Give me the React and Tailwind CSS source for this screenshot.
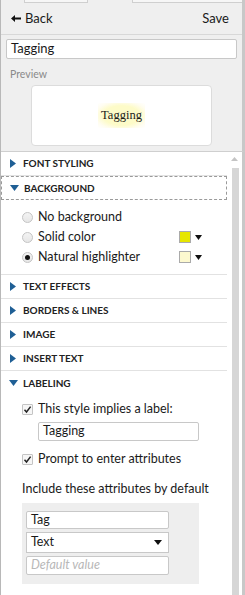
import React from "react";

function Tri({ open }) {
  return open ? (
    <svg width="9" height="7" viewBox="0 0 9 7" className="shrink-0">
      <path d="M0 0 L9 0 L4.5 6 Z" fill="#1f5f95" />
    </svg>
  ) : (
    <svg width="7" height="9" viewBox="0 0 7 9" className="shrink-0">
      <path d="M0 0 L6 4.5 L0 9 Z" fill="#1f5f95" />
    </svg>
  );
}

function SectionHead({ label, open, focused, last }) {
  return (
    <div
      className={
        "h-[24px] flex items-center pl-[8px] gap-[6px] " +
        (focused
          ? "border border-dashed border-[#9a9a9a] pl-[7px]"
          : last
          ? ""
          : "border-b border-[#e2e2e2]")
      }
    >
      <div className="w-[8px] flex justify-center">
        <Tri open={open} />
      </div>
      <span className="text-[10px] font-bold text-[#222]">{label}</span>
    </div>
  );
}

function Radio({ checked }) {
  return (
    <span className="w-[11px] h-[11px] rounded-full border border-[#c4c4c4] bg-gradient-to-b from-[#f4f4f4] to-[#e6e6e6] flex items-center justify-center shrink-0">
      {checked && <span className="w-[5px] h-[5px] rounded-full bg-[#111]" />}
    </span>
  );
}

function Check() {
  return (
    <span className="w-[11px] h-[11px] border border-[#c4c4c4] bg-[#f6f6f6] rounded-[1px] flex items-center justify-center shrink-0">
      <svg width="9" height="9" viewBox="0 0 9 9">
        <path d="M1.5 4.8 L3.5 7 L7.6 1.6" stroke="#222" strokeWidth="1.5" fill="none" />
      </svg>
    </span>
  );
}

function Swatch({ color }) {
  return (
    <div className="flex items-center gap-[4px]">
      <span className="w-[12px] h-[12px] border border-[#aaa]" style={{ background: color }} />
      <svg width="7" height="5" viewBox="0 0 7 5">
        <path d="M0 0 L7 0 L3.5 5 Z" fill="#111" />
      </svg>
    </div>
  );
}

export default function App() {
  return (
    <div className="w-[245px] h-[595px] overflow-hidden bg-white font-['Lato','Open_Sans',sans-serif] text-[#1a1a1a] border-l border-[#b8b8b8] flex flex-col">
      <div className="bg-[#efefef] border-r-[3px] border-[#c8c8c8] w-[244px]">
        <div className="flex h-[3px]">
          <div className="ml-[23px] w-[64px] border-b border-x border-[#cfcfcf] bg-[#f6f6f6]" />
          <div className="ml-[44px] w-[110px] border-b border-l border-[#cfcfcf] bg-[#f6f6f6]" />
        </div>
        <div className="h-[32px] flex items-center justify-between pl-[10px] pr-[13px] border-b border-[#d8d8d8]">
          <div className="flex items-center gap-[4px] text-[13px]">
            <svg width="10" height="7" viewBox="0 0 10 7">
              <path d="M0 3.5 L4 0 L4 2.5 L10 2.5 L10 4.5 L4 4.5 L4 7 Z" fill="#111" />
            </svg>
            <span>Back</span>
          </div>
          <span className="text-[13px]">Save</span>
        </div>
        <div className="px-[5px] pt-[4px]">
          <div className="h-[20px] bg-white border border-[#c8c8c8] rounded-[2px] flex items-center pl-[4px] text-[13px]">
            Tagging
          </div>
        </div>
        <div className="pl-[9px] pt-[9px] text-[10.5px] text-[#8a8a8a] leading-[13px]">Preview</div>
        <div className="pl-[30px] pt-[4px] pb-[5px]">
          <div className="w-[181px] h-[61px] bg-white border border-[#dcdcdc] rounded-[4px] flex items-center justify-center">
            <span className="font-['Liberation_Serif',serif] text-[12.5px] px-[3px] py-[3px] bg-[radial-gradient(ellipse_at_center,#fdfbc8_55%,#fffdf0_80%,#ffffff_100%)]">
              Tagging
            </span>
          </div>
        </div>
      </div>
      <div className="flex-1 flex border-t border-[#cfcfcf] w-[244px] border-r-[3px] border-r-[#c8c8c8]">
        <div className="w-[226px] shrink-0">
          <SectionHead label="FONT STYLING" />
          <SectionHead label="BACKGROUND" open focused />
          <div className="pl-[21px] pr-[25px] pt-[7px] pb-[7px] border-b border-[#e2e2e2] text-[12.5px]">
            <div className="h-[20px] flex items-center gap-[5px]">
              <Radio />
              <span>No background</span>
            </div>
            <div className="h-[20px] flex items-center gap-[5px]">
              <Radio />
              <span className="flex-1">Solid color</span>
              <Swatch color="#e6e600" />
            </div>
            <div className="h-[20px] flex items-center gap-[5px]">
              <Radio checked />
              <span className="flex-1">Natural highlighter</span>
              <Swatch color="#fdf9cf" />
            </div>
          </div>
          <SectionHead label="TEXT EFFECTS" />
          <SectionHead label="BORDERS & LINES" />
          <SectionHead label="IMAGE" />
          <SectionHead label="INSERT TEXT" />
          <SectionHead label="LABELING" open last />
          <div className="pl-[21px] text-[12.5px]">
            <div className="h-[22px] mt-[3px] flex items-center gap-[5px]">
              <Check />
              <span>This style implies a label:</span>
            </div>
            <div className="pl-[16px] pt-[2px]">
              <div className="w-[161px] h-[19px] border border-[#c8c8c8] rounded-[2px] flex items-center pl-[4px]">
                Tagging
              </div>
            </div>
            <div className="h-[22px] mt-[7px] flex items-center gap-[5px]">
              <Check />
              <span>Prompt to enter attributes</span>
            </div>
            <div className="mt-[10px] h-[18px] flex items-center">Include these attributes by default</div>
            <div className="mt-[5px] w-[177px] h-[81px] bg-[#eeeeee] pl-[4px] pt-[8px] flex flex-col gap-[3px]">
              <div className="w-[143px] h-[18px] bg-white border border-[#c8c8c8] rounded-[2px] flex items-center pl-[4px]">
                Tag
              </div>
              <div className="w-[143px] h-[21px] bg-white border border-[#c8c8c8] flex items-center justify-between pl-[4px] pr-[6px]">
                <span>Text</span>
                <svg width="8" height="5" viewBox="0 0 8 5">
                  <path d="M0 0 L8 0 L4 5 Z" fill="#111" />
                </svg>
              </div>
              <div className="w-[143px] h-[19px] bg-white border border-[#c8c8c8] rounded-[2px] flex items-center pl-[4px] italic text-[#b8b8b8]">
                Default value
              </div>
            </div>
          </div>
        </div>
        <div className="flex-1 flex flex-col items-center pt-[5px]">
          <svg width="7" height="4" viewBox="0 0 7 4">
            <path d="M0 4 L3.5 0 L7 4 Z" fill="#c4c4c4" />
          </svg>
          <div className="mt-[7px] w-[7px] flex-1 bg-[#d6d6d6] -mr-[1px]" />
        </div>
      </div>
    </div>
  );
}
